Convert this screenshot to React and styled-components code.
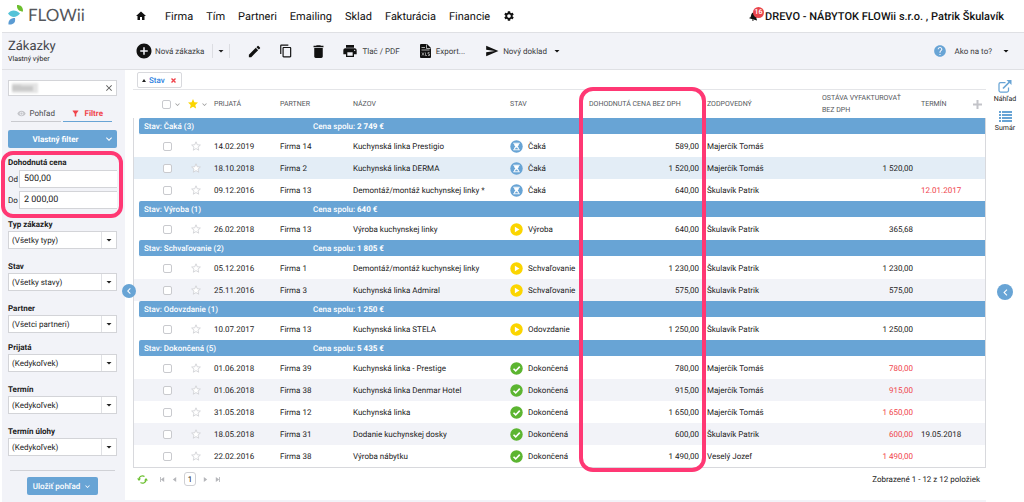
import React, { useState } from 'react';
import styled, { createGlobalStyle } from 'styled-components';
import {
    MdHome, MdSettings, MdNotifications, MdAddCircle, MdEdit, MdContentCopy,
    MdDelete, MdPrint, MdSend, MdHelp, MdArrowDropDown, MdChevronLeft, MdFilterAlt,
    MdClose, MdExpandMore, MdStar, MdVisibility,
} from 'react-icons/md';

const blue = '#68a4d5';
const panel = '#f2f3f8';
const red = '#f0434b';
const pink = '#ff3874';

const GlobalStyle = createGlobalStyle`
    * {
        box-sizing: border-box;
    }
    body {
        margin: 0;
        background: #fff;
        color: #222;
        font-family: Roboto, "Liberation Sans", sans-serif;
        font-size: 8px;
        text-rendering: geometricPrecision;
    }
    button, input, select {
        font: inherit;
        color: inherit;
        margin: 0;
        text-rendering: inherit;
    }
    button {
        padding: 0;
        border: 0;
        background: none;
        cursor: pointer;
    }
    a {
        color: inherit;
        text-decoration: none;
    }
    svg {
        display: block;
        flex: none;
    }
`

const Page = styled.div`
    display: flex;
    flex-direction: column;
    min-height: 100vh;
    padding-left: 2px;
`;

const TopBar = styled.header`
    display: flex;
    align-items: center;
    height: 33px;
    padding-right: 20px;
    border-bottom: 1px solid #dfe0e4;
`;

const Logo = styled.a`
    display: flex;
    align-items: center;
    gap: 4px;
    width: 133px;
    padding: 0 0 2px 6px;
    font-family: Lato, sans-serif;
    font-size: 17px;
    line-height: 20px;
    color: #55575c;
`;

const Nav = styled.nav`
    display: flex;
    align-items: center;
    flex: 1;
    gap: 13px;
    font-size: 11px;
    color: #111;
    a:first-child {
        margin-right: 5px;
    }
`;

const Account = styled.a`
    display: flex;
    align-items: center;
    gap: 5px;
    font-size: 11px;
    font-weight: 500;
    color: #111;
`;

const Bell = styled.span`
    position: relative;
    svg {
        transform: rotate(15deg);
    }
`;

const Badge = styled.span`
    position: absolute;
    top: -3px;
    right: -4px;
    width: 11px;
    height: 11px;
    border-radius: 50%;
    background: #e9454b;
    color: #fff;
    font-size: 7px;
    line-height: 11px;
    text-align: center;
`;

const Toolbar = styled.div`
    display: flex;
    align-items: center;
    height: 37px;
    padding-right: 12px;
    background: ${panel};
    border-bottom: 1px solid #dfe0e4;
`;

const Heading = styled.div`
    width: 133px;
    padding-left: 6px;
    h1 {
        margin: 0;
        font-size: 13px;
        font-weight: 400;
        line-height: 15px;
        color: #44464b;
    }
    p {
        margin: 0;
        font-size: 7px;
        line-height: 10px;
    }
`;

const Tools = styled.div`
    display: flex;
    align-items: center;
    flex: 1;
    gap: 8px;
`;

const TextTools = styled.div`
    display: flex;
    align-items: center;
    gap: 20px;
`;

const Tool = styled.button`
    display: flex;
    align-items: center;
    gap: ${p => p.$gap || 4}px;
    color: #3a3c40;
    font-size: 8px;
    svg {
        color: ${p => p.$color || '#111'};
    }
    svg:last-child:not(:first-child) {
        color: #111;
    }
`;

const IconTools = styled.div`
    display: flex;
    align-items: center;
`;

const IconTool = styled.button`
    display: flex;
    align-items: center;
    justify-content: center;
    width: 32px;
    height: 24px;
    color: #111;
`;

const SplitButton = styled.div`
    display: flex;
    align-items: center;
    gap: 8px;
`;

const SplitArrow = styled.button`
    display: flex;
    align-items: center;
    justify-content: center;
    width: 18px;
    height: 14px;
    border: solid #dcdde2;
    border-width: 0 1px;
`;

const Body = styled.div`
    display: flex;
    flex: 1;
`;

const Sidebar = styled.aside`
    position: relative;
    z-index: 1;
    width: 123px;
    padding: 10px 8px 6px 6px;
    background: ${panel};
`;

const Search = styled.div`
    display: flex;
    align-items: center;
    height: 16px;
    padding: 0 2px 0 3px;
    background: #fff;
    border: 1px solid #d3d4d8;
    input {
        flex: 1;
        min-width: 0;
        padding: 0;
        border: 0;
        outline: 0;
        background: none;
    }
`;

const Redacted = styled.svg`
    filter: blur(1px);
`;

const Tabs = styled.div`
    display: flex;
    gap: 2px;
    margin: 10px 5px 8px 3px;
`;

const Tab = styled.button`
    display: flex;
    align-items: center;
    justify-content: center;
    gap: 4px;
    flex: 1;
    height: 16px;
    border-bottom: 1px solid ${p => p.$active ? blue : '#c9cacf'};
    color: ${p => p.$active ? red : '#4a4c50'};
    font-weight: ${p => p.$active ? 700 : 400};
`;

const FilterButton = styled.button`
    display: flex;
    align-items: center;
    width: 100%;
    height: 18px;
    padding-right: 2px;
    border-radius: 2px;
    background: ${blue};
    color: #fff;
    font-size: 8px;
    font-weight: 700;
    span {
        flex: 1;
    }
`;

const PriceFilter = styled.div`
    position: relative;
    display: flex;
    flex-direction: column;
    gap: 3px;
    margin: 9px 0 10px;
    h2 {
        margin: 0 0 -2px;
        font-size: 8px;
        font-weight: 700;
        line-height: 12px;
    }
`;

const PriceRow = styled.label`
    display: grid;
    grid-template-columns: 11px 1fr;
    align-items: center;
    input {
        width: 100%;
        height: 18px;
        padding: 0 4px;
        border: 1px solid #d3d4d8;
        border-right: 0;
        background: #fff;
        font-size: 9px;
    }
`;

const FilterHighlight = styled.div`
    position: absolute;
    inset: -6px -6px -9px -7px;
    border: 4px solid ${pink};
    border-radius: 12px;
    pointer-events: none;
`;

const Field = styled.div`
    margin-bottom: ${p => p.$tight ? 9 : 12}px;
    label {
        display: block;
        font-weight: 700;
        line-height: 12px;
    }
`;

const SelectBox = styled.div`
    display: flex;
    align-items: center;
    height: 18px;
    background: #fff;
    border: 1px solid #d3d4d8;
    select {
        appearance: none;
        flex: 1;
        min-width: 0;
        height: 16px;
        padding: 0 3px;
        border: 0;
        border-right: 1px solid #e0e1e5;
        background: none;
    }
    svg {
        margin: 0 1px;
    }
`;

const Divider = styled.hr`
    margin: 14px 2px 6px;
    border: 0;
    border-top: 1px solid #d0d1d6;
`;

const SaveButton = styled.button`
    display: flex;
    align-items: center;
    justify-content: center;
    gap: 3px;
    width: 71px;
    height: 18px;
    margin: 0 auto;
    border-radius: 2px;
    background: ${blue};
    color: #fff;
    font-weight: 500;
`;

const RoundButton = styled.button`
    display: flex;
    align-items: center;
    justify-content: center;
    width: ${p => p.$size}px;
    height: ${p => p.$size}px;
    border-radius: 50%;
    background: ${blue};
    color: #fff;
`;

const SidebarToggle = styled(RoundButton)`
    position: absolute;
    top: 214px;
    right: -11px;
`;

const Main = styled.main`
    display: flex;
    flex-direction: column;
    flex: 1;
    min-width: 0;
    padding-left: 8px;
    border-bottom: 2px solid ${panel};
`;

const GroupBar = styled.div`
    display: flex;
    align-items: center;
    height: 20px;
    padding: 1px 4px 0;
    border-bottom: 1px solid #e4e5e8;
`;

const Chip = styled.button`
    display: flex;
    align-items: center;
    gap: 3px;
    height: 16px;
    padding: 0 5px 0 4px;
    border: 1px solid #d8d9dd;
    border-radius: 2px;
    color: #2d7fe0;
    font-weight: 500;
    svg:last-child {
        margin-left: 3px;
    }
`;

const TableWrap = styled.div`
    position: relative;
`;

const Table = styled.table`
    width: 100%;
    table-layout: fixed;
    border-collapse: separate;
    border-spacing: 0;
    border-bottom: 1px solid #d8d9dd;
    th, td {
        padding: 0 4px;
        text-align: left;
        font-weight: 400;
        white-space: nowrap;
    }
    thead th {
        height: 28px;
        font-size: 7px;
        line-height: 12px;
        text-transform: uppercase;
        color: #55575c;
    }
    tbody th:first-child, tbody td:first-child {
        border-left: 1px solid #d8d9dd;
    }
    tbody th:last-child, tbody td:last-child {
        border-right: 1px solid #d8d9dd;
    }
`;

const Col = styled.col`
    width: ${p => p.$w ? `${p.$w}px` : 'auto'};
`;

const GroupRow = styled.tr`
    color: #fff;
    th {
        height: 17px;
        padding: 0 0 0 5px;
    }
    b {
        font-weight: 700;
    }
`;

const GroupFill = styled.div`
    display: grid;
    grid-template-columns: 169px 1fr;
    align-items: center;
    height: 17px;
    padding-left: 5px;
    border-bottom: 1px solid #fff;
    border-radius: 2px 0 0 2px;
    background: ${blue};
    font-weight: 500;
`;

const Row = styled.tr`
    background: ${p => p.$tone === 'selected' ? '#e3edf6' : p.$tone === 'even' ? panel : '#fff'};
    td {
        height: 22px;
    }
`;

const Amount = styled.td`
    && {
        text-align: right;
    }
    color: ${p => p.$late ? red : 'inherit'};
`;

const DateCell = styled.td`
    color: ${p => p.$late ? red : 'inherit'};
`;

const Check = styled.input`
    appearance: none;
    display: block;
    width: 9px;
    height: 9px;
    border: 1px solid #c9cace;
    border-radius: 2px;
    background: #fff;
`;

const CheckGroup = styled.div`
    display: flex;
    align-items: center;
    gap: 2px;
    padding-left: 25px;
    color: #999;
`;

const StarButton = styled.button`
    display: flex;
    align-items: center;
    color: #999;
    gap: 1px;
`;

const HeadStar = styled(StarButton)`
    margin-left: -4px;
`;

const Status = styled.span`
    display: flex;
    align-items: center;
    gap: 5px;
`;

const ColumnHighlight = styled.div`
    position: absolute;
    top: -3px;
    bottom: -4px;
    right: 280px;
    width: 127px;
    border: 4px solid ${pink};
    border-radius: 14px;
    pointer-events: none;
`;

const Pager = styled.footer`
    display: flex;
    align-items: center;
    justify-content: space-between;
    height: 22px;
    padding: 0 6px 0 4px;
`;

const PagerButtons = styled.div`
    display: flex;
    align-items: center;
    gap: 7px;
    color: #b5b6ba;
    button:first-child {
        margin-right: 5px;
    }
`;

const PageNumber = styled.button`
    width: 12px;
    height: 14px;
    border: 1px solid #cfd0d4;
    border-radius: 3px;
    color: #222;
`;

const Rail = styled.aside`
    display: flex;
    flex-direction: column;
    align-items: center;
    width: 38px;
    padding-top: 10px;
    gap: 8px;
`;

const RailButton = styled.button`
    display: flex;
    flex-direction: column;
    align-items: center;
    gap: 2px;
    font-size: 7px;
    line-height: 8px;
`;

const RailToggle = styled(RoundButton)`
    margin-top: 144px;
`;

const groups = [
    {
        name: 'Čaká', count: 3, total: '2 749 €', icon: 'wait',
        rows: [
            ['14.02.2019', 'Firma 14', 'Kuchynská linka Prestigio', '589,00', 'Majerčík Tomáš', '', ''],
            ['18.10.2018', 'Firma 2', 'Kuchynská linka DERMA', '1 520,00', 'Majerčík Tomáš', '1 520,00', ''],
            ['09.12.2016', 'Firma 13', 'Demontáž/montáž kuchynskej linky *', '640,00', 'Škulavík Patrik', '', '12.01.2017'],
        ],
    },
    {
        name: 'Výroba', count: 1, total: '640 €', icon: 'play',
        rows: [['26.02.2018', 'Firma 13', 'Výroba kuchynskej linky', '640,00', 'Škulavík Patrik', '365,68', '']],
    },
    {
        name: 'Schvaľovanie', count: 2, total: '1 805 €', icon: 'play',
        rows: [
            ['05.12.2016', 'Firma 1', 'Demontáž/montáž kuchynskej linky', '1 230,00', 'Škulavík Patrik', '1 230,00', ''],
            ['25.11.2016', 'Firma 3', 'Kuchynská linka Admiral', '575,00', 'Škulavík Patrik', '575,00', ''],
        ],
    },
    {
        name: 'Odovzdanie', count: 1, total: '1 250 €', icon: 'play',
        rows: [['10.07.2017', 'Firma 13', 'Kuchynská linka STELA', '1 250,00', 'Škulavík Patrik', '1 250,00', '']],
    },
    {
        name: 'Dokončená', count: 5, total: '5 435 €', icon: 'done',
        rows: [
            ['01.06.2018', 'Firma 39', 'Kuchynská linka - Prestige', '780,00', 'Majerčík Tomáš', '780,00', ''],
            ['01.06.2018', 'Firma 38', 'Kuchynská linka Denmar Hotel', '915,00', 'Majerčík Tomáš', '915,00', ''],
            ['31.05.2018', 'Firma 12', 'Kuchynská linka', '1 650,00', 'Majerčík Tomáš', '1 650,00', ''],
            ['18.05.2018', 'Firma 31', 'Dodanie kuchynskej dosky', '600,00', 'Škulavík Patrik', '600,00', '19.05.2018'],
            ['22.02.2016', 'Firma 38', 'Výroba nábytku', '1 490,00', 'Veselý Jozef', '1 490,00', ''],
        ],
    },
]

const filters = [
    { id: 'typ', label: 'Typ zákazky', value: '(Všetky typy)' },
    { id: 'stav', label: 'Stav', value: '(Všetky stavy)' },
    { id: 'partner', label: 'Partner', value: '(Všetci partneri)', tight: true },
    { id: 'prijata', label: 'Prijatá', value: '(Kedykoľvek)' },
    { id: 'termin', label: 'Termín', value: '(Kedykoľvek)' },
    { id: 'uloha', label: 'Termín úlohy', value: '(Kedykoľvek)' },
]

const menu = ['Firma', 'Tím', 'Partneri', 'Emailing', 'Sklad', 'Fakturácia', 'Financie']

//  Icons
const LogoMark = () => (
    <svg width="16" height="20" viewBox="0 0 16 20">
        <path d="M9 0c4 0 6 2 6 6.500-3.500 0-6.500-2-6-6.500z" fill="#6cbf2e" />
        <path d="M0 8.500c3-4 8-4 12 0-3.500 4.500-9 4.500-12 0z" fill="#55c3d8" />
        <path d="M7 13c.8 4.500-1.500 7-6.500 6.500C0 15.500 2.500 13 7 13z" fill="#5a9bd3" />
    </svg>
)

const StatusIcon = ({ type }) => (
    <svg width="13" height="13" viewBox="0 0 24 24">
        <circle cx="12" cy="12" r="11.500" fill={type === 'wait' ? blue : type === 'play' ? '#fbd500' : '#5cb531'} />
        {type === 'wait' && (
            <g>
                <path d="M6 5h12v2H6zM6 17h12v2H6z" fill="#fff" />
                <path d="M7.500 7h9c0 2.500-1 4-2.500 5 1.500 1 2.500 2.500 2.500 5h-9c0-2.500 1-4 2.500-5-1.500-1-2.500-2.500-2.500-5z" fill="#fff" />
                <path d="M9.500 17c0-1.500 1-2.500 2.500-3 1.500.5 2.500 1.500 2.500 3z" fill={blue} />
            </g>
        )}
        {type === 'play' && <path d="M9 7l8.500 5L9 17z" fill="#fff" />}
        {type === 'done' && <path d="M6.500 12.500l4 4 7.500-8" fill="none" stroke="#fff" strokeWidth="3" />}
    </svg>
)

const Star = () => (
    <svg width="10" height="10" viewBox="0 0 24 24">
        <path d="M12 2l3 7 7.500.7-5.700 5 1.700 7.400L12 18.200l-6.500 3.900 1.700-7.400-5.700-5L9 9z" fill="#fff" stroke="#cfd0d4" strokeWidth="2" />
    </svg>
)

const XlsIcon = () => (
    <svg width="11" height="14" viewBox="0 0 22 28">
        <path d="M2 0h12l8 8v18a2 2 0 0 1-2 2H2a2 2 0 0 1-2-2V2a2 2 0 0 1 2-2z" fill="#111" />
        <path d="M13 1v8h8M3 7h7M3 12h16" fill="none" stroke="#ddd" strokeWidth="1.500" />
        <path d="M4 17l4 6m0-6l-4 6M11 17v6h3M19 17h-3v3h3v3h-3" fill="none" stroke="#ddd" strokeWidth="1.200" />
    </svg>
)

const RefreshIcon = () => (
    <svg width="11" height="11" viewBox="0 0 22 22" fill="none" stroke="#6bbf2f" strokeWidth="2.500">
        <path d="M4 11a7 7 0 0 1 11-6M18 11a7 7 0 0 1-11 6" />
        <path d="M0 9h8l-4 5zM14 13h8l-4-5z" fill="#6bbf2f" stroke="none" />
    </svg>
)

const PagerIcon = ({ flip, bar }) => (
    <svg width="5" height="5" viewBox="0 0 6 6" fill="currentColor">
        <path d={flip ? 'M1 0l4 3-4 3z' : 'M5 0L1 3l4 3z'} />
        {bar && <path d={flip ? 'M5 0h1v6H5z' : 'M0 0h1v6H0z'} />}
    </svg>
)

const PreviewIcon = () => (
    <svg width="14" height="13" viewBox="0 0 28 26" fill="none" stroke={blue}>
        <path d="M15 5H5a3 3 0 0 0-3 3v13a3 3 0 0 0 3 3h13a3 3 0 0 0 3-3v-6" strokeWidth="2.500" />
        <path d="M10 17L23 4" strokeWidth="3.500" />
        <path d="M17 0h10v10z" fill={blue} stroke="none" />
    </svg>
)

const ListIcon = () => (
    <svg width="13" height="11" viewBox="0 0 13 11" fill={blue}>
        <path d="M0 0h2v2H0zM3 0h10v2H3zM0 3h2v2H0zM3 3h10v2H3zM0 6h2v2H0zM3 6h10v2H3zM0 9h2v2H0zM3 9h10v2H3z" />
    </svg>
)

const UpIcon = () => (
    <svg width="4" height="3" viewBox="0 0 4 3">
        <path d="M2 0l2 3H0z" fill="#222" />
    </svg>
)

const RemoveIcon = () => (
    <svg width="5" height="5" viewBox="0 0 5 5">
        <path d="M.5.5l4 4m0-4l-4 4" stroke={red} strokeWidth="1.400" />
    </svg>
)

const PlusIcon = () => (
    <svg width="9" height="9" viewBox="0 0 9 9">
        <path d="M4.500 0v9M0 4.500h9" stroke="#c3c4c9" strokeWidth="2" />
    </svg>
)

function FilterPanel() {
    const [from, setFrom] = useState('500,00')
    const [to, setTo] = useState('2 000,00')

    return (
        <Sidebar>
            <Search>
                <Redacted width="26" height="10" viewBox="0 0 26 10">
                    <path d="M0 0h26v10H0z" fill="#e4e4e4" />
                    <path d="M0 2h9v6H0zM9 3h12v5H9z" fill="#c9c9c9" />
                </Redacted>
                <input aria-label="Hľadať" />
                <MdClose size={10} color="#555" />
            </Search>
            <Tabs>
                <Tab><MdVisibility size={9} color="#c3c4c9" />Pohľad</Tab>
                <Tab $active><MdFilterAlt size={9} />Filtre</Tab>
            </Tabs>
            <FilterButton><span>Vlastný filter</span><MdExpandMore size={12} /></FilterButton>
            <PriceFilter role="group" aria-labelledby="cena">
                <h2 id="cena">Dohodnutá cena</h2>
                <PriceRow>Od<input value={from} onChange={(e) => setFrom(e.target.value)} /></PriceRow>
                <PriceRow>Do<input value={to} onChange={(e) => setTo(e.target.value)} /></PriceRow>
                <FilterHighlight />
            </PriceFilter>
            {filters.map(f => (
                <Field key={f.id} $tight={f.tight}>
                    <label htmlFor={f.id}>{f.label}</label>
                    <SelectBox>
                        <select id={f.id}><option>{f.value}</option></select>
                        <MdArrowDropDown size={12} />
                    </SelectBox>
                </Field>
            ))}
            <Divider />
            <SaveButton>Uložiť pohľad<MdExpandMore size={9} /></SaveButton>
            <SidebarToggle $size={14} aria-label="Skryť panel"><MdChevronLeft size={12} /></SidebarToggle>
        </Sidebar>
    )
}

function OrdersTable() {
    return (
        <TableWrap>
            <Table>
                <colgroup>
                    <Col $w={54} /><Col $w={23} /><Col $w={66} /><Col $w={73} /><Col />
                    <Col $w={79} /><Col $w={118} /><Col $w={115} /><Col $w={99} /><Col $w={52} /><Col $w={17} />
                </colgroup>
                <thead>
                    <tr>
                        <th><CheckGroup><Check type="checkbox" aria-label="Vybrať všetky" /><MdExpandMore size={9} /></CheckGroup></th>
                        <th><HeadStar aria-label="Obľúbené"><MdStar size={12} color="#fbd500" /><MdExpandMore size={9} /></HeadStar></th>
                        <th>Prijatá</th>
                        <th>Partner</th>
                        <th>Názov</th>
                        <th>Stav</th>
                        <th>Dohodnutá cena bez DPH</th>
                        <th>Zodpovedný</th>
                        <th>Ostáva vyfakturovať<br />bez DPH</th>
                        <th>Termín</th>
                        <th><PlusIcon /></th>
                    </tr>
                </thead>
                <tbody>
                    {groups.map(g => (
                        <React.Fragment key={g.name}>
                            <GroupRow>
                                <th colSpan={11}>
                                    <GroupFill>
                                        <span>Stav: {g.name} ({g.count})</span>
                                        <span>Cena spolu: <b>{g.total}</b></span>
                                    </GroupFill>
                                </th>
                            </GroupRow>
                            {g.rows.map((r, i) => (
                                <Row key={r[0] + r[1]} $tone={i % 2 === 0 ? 'odd' : g.icon === 'wait' ? 'selected' : 'even'}>
                                    <td><CheckGroup><Check type="checkbox" aria-label={r[2]} /></CheckGroup></td>
                                    <td><StarButton aria-label="Obľúbené"><Star /></StarButton></td>
                                    <td>{r[0]}</td>
                                    <td>{r[1]}</td>
                                    <td>{r[2]}</td>
                                    <td><Status><StatusIcon type={g.icon} />{g.name}</Status></td>
                                    <Amount>{r[3]}</Amount>
                                    <td>{r[4]}</td>
                                    <Amount $late={g.icon === 'done'}>{r[5]}</Amount>
                                    <DateCell $late={g.icon === 'wait'}>{r[6]}</DateCell>
                                    <td></td>
                                </Row>
                            ))}
                        </React.Fragment>
                    ))}
                </tbody>
            </Table>
            <ColumnHighlight />
        </TableWrap>
    )
}

function App() {
    return (
        <Page>
            <GlobalStyle />
            <TopBar>
                <Logo href="#"><LogoMark />FLOWii</Logo>
                <Nav>
                    <a href="#" aria-label="Domov"><MdHome size={12} /></a>
                    {menu.map(m => <a href="#" key={m}>{m}</a>)}
                    <a href="#" aria-label="Nastavenia"><MdSettings size={12} /></a>
                </Nav>
                <Account href="#">
                    <Bell><MdNotifications size={12} /><Badge>16</Badge></Bell>
                    DREVO - NÁBYTOK FLOWii s.r.o. , Patrik Škulavík
                </Account>
            </TopBar>
            <Toolbar>
                <Heading>
                    <h1>Zákazky</h1>
                    <p>Vlastný výber</p>
                </Heading>
                <Tools>
                    <SplitButton>
                        <Tool $gap={2}><MdAddCircle size={18} />Nová zákazka</Tool>
                        <SplitArrow aria-label="Viac"><MdArrowDropDown size={12} /></SplitArrow>
                    </SplitButton>
                    <IconTools>
                        <IconTool aria-label="Upraviť"><MdEdit size={15} /></IconTool>
                        <IconTool aria-label="Kopírovať"><MdContentCopy size={14} /></IconTool>
                        <IconTool aria-label="Zmazať"><MdDelete size={17} /></IconTool>
                    </IconTools>
                    <TextTools>
                        <Tool><MdPrint size={16} />Tlač / PDF</Tool>
                        <Tool $gap={5}><XlsIcon />Export...</Tool>
                        <Tool><MdSend size={14} />Nový doklad<MdArrowDropDown size={12} /></Tool>
                    </TextTools>
                </Tools>
                <Tool $gap={8} $color={blue}><MdHelp size={14} />Ako na to?<MdArrowDropDown size={12} /></Tool>
            </Toolbar>
            <Body>
                <FilterPanel />
                <Main>
                    <GroupBar>
                        <Chip><UpIcon />Stav<RemoveIcon /></Chip>
                    </GroupBar>
                    <OrdersTable />
                    <Pager>
                        <PagerButtons>
                            <button aria-label="Obnoviť"><RefreshIcon /></button>
                            <button aria-label="Prvá"><PagerIcon bar /></button>
                            <button aria-label="Predošlá"><PagerIcon /></button>
                            <PageNumber>1</PageNumber>
                            <button aria-label="Ďalšia"><PagerIcon flip /></button>
                            <button aria-label="Posledná"><PagerIcon flip bar /></button>
                        </PagerButtons>
                        <span>Zobrazené 1 - 12 z 12 položiek</span>
                    </Pager>
                </Main>
                <Rail>
                    <RailButton><PreviewIcon />Náhľad</RailButton>
                    <RailButton><ListIcon />Sumár</RailButton>
                    <RailToggle $size={16} aria-label="Zobraziť panel"><MdChevronLeft size={13} /></RailToggle>
                </Rail>
            </Body>
        </Page>
    )
}

export default App;
